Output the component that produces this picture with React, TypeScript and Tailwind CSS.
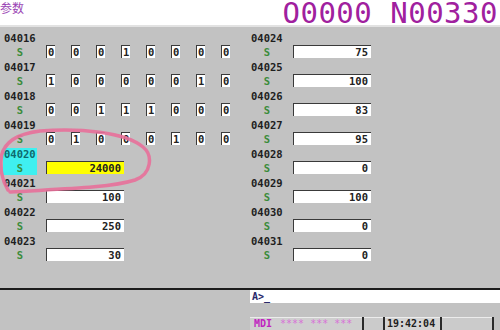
import React from "react";

type Param = { no: string; bits?: number[]; value?: string; active?: boolean };

const leftParams: Param[] = [
  { no: "04016", bits: [0, 0, 0, 1, 0, 0, 0, 0] },
  { no: "04017", bits: [1, 0, 0, 0, 0, 0, 1, 0] },
  { no: "04018", bits: [0, 0, 1, 1, 1, 0, 0, 0] },
  { no: "04019", bits: [0, 1, 0, 0, 0, 1, 0, 0] },
  { no: "04020", value: "24000", active: true },
  { no: "04021", value: "100" },
  { no: "04022", value: "250" },
  { no: "04023", value: "30" },
];

const rightParams: Param[] = [
  { no: "04024", value: "75" },
  { no: "04025", value: "100" },
  { no: "04026", value: "83" },
  { no: "04027", value: "95" },
  { no: "04028", value: "0" },
  { no: "04029", value: "100" },
  { no: "04030", value: "0" },
  { no: "04031", value: "0" },
];

const mono = "font-['DejaVu_Sans_Mono',monospace]";

function ParamBlock({ p }: { p: Param }) {
  return (
    <div className="flex flex-col">
      {/* parameter number */}
      <div
        className={`h-[13px] w-[34px] pl-[1px] text-[10.5px] leading-[13px] font-bold ${
          p.active ? "bg-[#3ff0f0] text-[#0e6a6e]" : "text-[#1e1e1e]"
        }`}
      >
        {p.no}
      </div>
      <div className="flex h-[16px] items-start">
        <div
          className={`h-[14px] w-[34px] text-center text-[10.5px] leading-[14px] font-bold text-[#3a8c3a] ${
            p.active ? "bg-[#3ff0f0]" : ""
          }`}
        >
          S
        </div>
        {p.bits ? (
          <div className="ml-[9px] flex gap-[16px]">
            {p.bits.map((b, i) => (
              <div
                key={i}
                className="h-[13px] w-[9px] border-l border-t border-[#3a3a3a] bg-white pl-[1px] text-[10.5px] leading-[12px] font-bold text-[#222]"
              >
                {b}
              </div>
            ))}
          </div>
        ) : (
          <div
            className={`ml-[9px] h-[13px] w-[78px] border-l border-t border-[#3a3a3a] pr-[3px] text-right text-[10.5px] leading-[12px] font-bold text-[#222] ${
              p.active ? "bg-[#ffff00]" : "bg-white"
            }`}
          >
            {p.value}
          </div>
        )}
      </div>
    </div>
  );
}

export default function App() {
  return (
    <div className={`relative h-[330px] w-[500px] overflow-hidden bg-[#c2c2c2] ${mono}`}>
      {/* Header */}
      <div className="flex h-[27px] items-start justify-between border-b-2 border-[#e2e2e2] bg-white pr-[2px]">
        <span className="pt-[1px] font-['Noto_Sans_CJK_SC',sans-serif] text-[12px] leading-[14px] text-[#9a44b4]">
          参数
        </span>
        <span className="text-[29px] leading-[27px] tracking-[0.5px] whitespace-nowrap text-[#a0209e]">
          O0000 N00330
        </span>
      </div>

      {/* Parameter columns */}
      <div className="grid h-[261px] grid-cols-[250px_250px] pt-[5px]">
        <div className="flex flex-col pl-[3px]">
          {leftParams.map((p) => (
            <ParamBlock key={p.no} p={p} />
          ))}
        </div>
        <div className="flex flex-col">
          {rightParams.map((p) => (
            <ParamBlock key={p.no} p={p} />
          ))}
        </div>
      </div>

      <div className="h-[2px] bg-[#1c1c1c]" />

      {/* Key input line */}
      <div className="flex h-[13px]">
        <div className="w-[250px]" />
        <div className="flex-1 bg-white pl-[2px] text-[10px] leading-[13px] font-bold text-[#2a2a6a]">
          A&gt;_
        </div>
      </div>

      <div className="h-[14px]" />

      {/* Status bar */}
      <div className="flex h-[13px] text-[10px] leading-[12px] font-bold">
        <div className="w-[250px]" />
        <div className="flex w-[112px] gap-[8px] border-t border-[#ececec] bg-[#cfcfcf] pl-[4px]">
          <span className="text-[#c024c0]">MDI</span>
          <span className="font-normal text-[#d870d8]">**** *** ***</span>
        </div>
        <div className="w-[2px] bg-[#2a2a2a]" />
        <div className="w-[19px] border-t border-[#ececec] bg-[#cbcbcb]" />
        <div className="w-[2px] bg-[#2a2a2a]" />
        <div className="w-[55px] border-t border-[#ececec] bg-[#d4d4d4] pl-[2px] text-[#1e1e1e]">
          19:42:04
        </div>
        <div className="w-[2px] bg-[#2a2a2a]" />
        <div className="w-[50px] border-t border-[#ececec] bg-[#cbcbcb]" />
        <div className="w-[2px] bg-[#2a2a2a]" />
      </div>

      {/* Hand-drawn marker loop */}
      <svg
        className="pointer-events-none absolute left-0 top-0"
        width="500"
        height="330"
        viewBox="0 0 500 330"
      >
        <path
          d="M 10 192 C 60 189, 110 188, 135 180 C 152 174, 153 155, 143 147 C 125 132, 80 128, 40 131 C 15 134, 2 143, 1 160 C 0 175, 5 185, 8 190"
          fill="none"
          stroke="#e8709a"
          strokeWidth="3.5"
          strokeLinecap="round"
          opacity="0.9"
        />
      </svg>
    </div>
  );
}
